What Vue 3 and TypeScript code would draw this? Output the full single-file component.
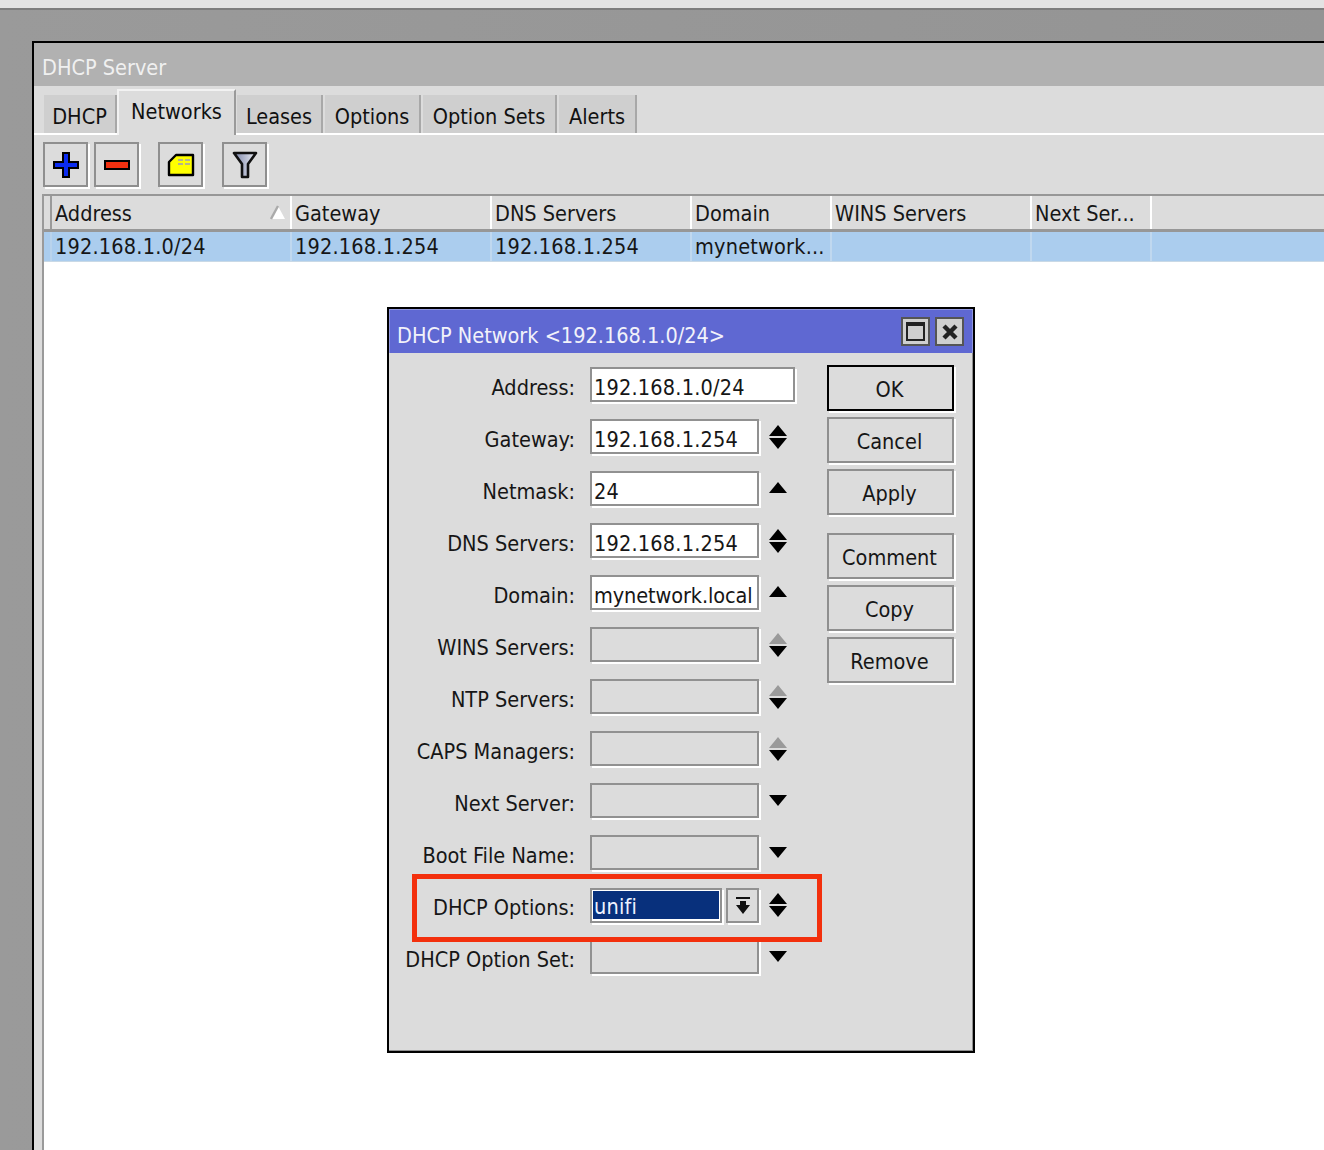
<script setup lang="ts">
type Arrow = 'both' | 'up' | 'down' | 'disabled' | 'none'
interface Row { label: string; value: string; wide?: boolean; enabled: boolean; arrow: Arrow; combo?: boolean; tight?: boolean }

const tabs = ['DHCP', 'Networks', 'Leases', 'Options', 'Option Sets', 'Alerts']
const tabWidths = [73, 119, 86, 96, 134, 78]

const columns = [
  { title: 'Address', cell: '192.168.1.0/24', width: 240, sort: true },
  { title: 'Gateway', cell: '192.168.1.254', width: 200 },
  { title: 'DNS Servers', cell: '192.168.1.254', width: 200 },
  { title: 'Domain', cell: 'mynetwork...', width: 140 },
  { title: 'WINS Servers', cell: '', width: 200 },
  { title: 'Next Ser...', cell: '', width: 120 },
]

const rows: Row[] = [
  { label: 'Address:', value: '192.168.1.0/24', wide: true, enabled: true, arrow: 'none' },
  { label: 'Gateway:', value: '192.168.1.254', enabled: true, arrow: 'both' },
  { label: 'Netmask:', value: '24', enabled: true, arrow: 'up' },
  { label: 'DNS Servers:', value: '192.168.1.254', enabled: true, arrow: 'both' },
  { label: 'Domain:', value: 'mynetwork.local', enabled: true, arrow: 'up', tight: true },
  { label: 'WINS Servers:', value: '', enabled: false, arrow: 'disabled' },
  { label: 'NTP Servers:', value: '', enabled: false, arrow: 'disabled' },
  { label: 'CAPS Managers:', value: '', enabled: false, arrow: 'disabled' },
  { label: 'Next Server:', value: '', enabled: false, arrow: 'down' },
  { label: 'Boot File Name:', value: '', enabled: false, arrow: 'down' },
  { label: 'DHCP Options:', value: 'unifi', enabled: true, arrow: 'both', combo: true },
  { label: 'DHCP Option Set:', value: '', enabled: false, arrow: 'down' },
]

const buttonGroups = [['OK', 'Cancel', 'Apply'], ['Comment', 'Copy', 'Remove']]
</script>

<template>
  <div class="page">
    <div class="strip"></div>
    <div class="desk">
      <div class="window">
        <div class="win-title">DHCP Server</div>
        <div class="tabs">
          <div
            v-for="(t, i) in tabs"
            :key="t"
            class="tab"
            :class="{ active: t === 'Networks' }"
            :style="{ width: tabWidths[i] + 'px' }"
          >{{ t }}</div>
        </div>
        <div class="toolbar">
          <div class="tool">
            <svg width="26" height="26" viewBox="0 0 26 26"><path d="M10 1h6v9h9v6h-9v9h-6v-9H1v-6h9z" fill="#0a2bf0" stroke="#000" stroke-width="2"/></svg>
          </div>
          <div class="tool">
            <svg width="26" height="12" viewBox="0 0 26 12"><rect x="1" y="2" width="24" height="8" fill="#f03010" stroke="#000" stroke-width="2"/></svg>
          </div>
          <div class="tool gap">
            <svg width="28" height="24" viewBox="0 0 28 24"><path d="M9 2h17v20H2V9z" fill="#ffff00" stroke="#000" stroke-width="2.4" stroke-linejoin="round"/><path d="M11 7h14M11 11h14" stroke="#b5b58a" stroke-width="2" stroke-dasharray="5 2"/></svg>
          </div>
          <div class="tool gap">
            <svg width="26" height="28" viewBox="0 0 26 28"><defs><linearGradient id="fun" x1="0" x2="1" y1="0" y2="0"><stop offset="0" stop-color="#7d86aa"/><stop offset="1" stop-color="#eceef4"/></linearGradient></defs><path d="M2 2h22l-8 11v13h-6V13z" fill="url(#fun)" stroke="#111" stroke-width="2.6" stroke-linejoin="round"/></svg>
          </div>
        </div>
        <div class="table">
          <div class="thead">
            <div class="stub"></div>
            <div v-for="c in columns" :key="c.title" class="th" :style="{ width: c.width + 'px' }">
              <span>{{ c.title }}</span>
              <svg v-if="c.sort" class="sort" width="16" height="15" viewBox="0 0 16 15"><path d="M8 1l7 13H1z" fill="#fff"/><path d="M8 1L1 14" stroke="#aaa" stroke-width="2.4"/></svg>
            </div>
            <div class="th rest"></div>
          </div>
          <div class="trow">
            <div class="stub cell-stub"></div>
            <div v-for="c in columns" :key="c.title" class="td" :style="{ width: c.width + 'px' }">{{ c.cell }}</div>
            <div class="td rest"></div>
          </div>
        </div>
      </div>
    </div>

    <div class="dialog">
      <div class="dlg-title">
        <span>DHCP Network &lt;192.168.1.0/24&gt;</span>
        <div class="dlg-btns">
          <div class="dlg-btn"><i class="max"></i></div>
          <div class="dlg-btn">
            <svg width="18" height="18" viewBox="0 0 18 18"><path d="M3 3l12 12M15 3L3 15" stroke="#222" stroke-width="4.4"/></svg>
          </div>
        </div>
      </div>
      <div class="dlg-body">
        <div class="form">
          <div v-for="r in rows" :key="r.label" class="frow">
            <label class="flabel">{{ r.label }}</label>
            <div v-if="r.combo" class="combo">
              <div class="field sel-wrap"><span class="sel">{{ r.value }}</span></div>
              <div class="dd">
                <svg width="16" height="17" viewBox="0 0 16 17"><path d="M1 0h14v2H1zM5 4h6v4h4l-7 9-7-9h4z" fill="#111"/></svg>
              </div>
            </div>
            <div v-else class="field" :class="{ wide: r.wide, off: !r.enabled, tight: r.tight }">{{ r.value }}</div>
            <svg v-if="r.arrow !== 'none'" class="arrow" :class="r.arrow" width="20" height="24" viewBox="0 0 20 24">
              <path v-if="r.arrow === 'both' || r.arrow === 'up'" d="M10 0l9 11H1z" fill="#000"/>
              <path v-if="r.arrow === 'disabled'" d="M10 0l9 11H1z" fill="#9a9a9a"/>
              <path v-if="r.arrow === 'both' || r.arrow === 'disabled'" d="M1 13h18l-9 11z" fill="#000"/>
              <path v-if="r.arrow === 'down'" d="M1 0h18l-9 11z" fill="#000"/>
            </svg>
          </div>
        </div>
        <div class="actions">
          <div v-for="(g, i) in buttonGroups" :key="i" class="group">
            <div v-for="b in g" :key="b" class="btn" :class="{ def: b === 'OK' }">{{ b }}</div>
          </div>
        </div>
      </div>
      <div class="highlight"></div>
    </div>
  </div>
</template>

<style scoped>
.page {
  position: relative;
  width: 1324px;
  height: 1150px;
  overflow: hidden;
  background: linear-gradient(90deg, #9a9a9a, #949494);
  font-family: "DejaVu Sans Condensed", "DejaVu Sans", sans-serif;
  font-stretch: condensed;
  font-size: 21.5px;
  color: #161616;
}
.strip {
  height: 8px;
  background: #e3e3e3;
  border-bottom: 2px solid #7d7d7d;
}
.desk {
  height: 1140px;
  padding: 31px 0 0 32px;
  box-sizing: border-box;
}
.window {
  display: flex;
  flex-direction: column;
  width: 1300px;
  height: 1109px;
  border: 2px solid #000;
  border-bottom: 0;
  background: #dcdcdc;
  box-sizing: border-box;
}
.win-title {
  height: 43px;
  line-height: 50px;
  padding-left: 8px;
  background: #b1b1b1;
  color: #f0f0f0;
  flex: none;
}
.tabs {
  display: flex;
  align-items: flex-end;
  gap: 2px;
  height: 49px;
  padding-left: 10px;
  background: #dcdcdc;
  border-bottom: 2px solid #fff;
  box-sizing: border-box;
  flex: none;
}
.tab {
  height: 38px;
  line-height: 43px;
  text-align: center;
  background: #cfcfcf;
  border-right: 2px solid #a8a8a8;
  box-sizing: border-box;
  flex: none;
  color: #111;
}
.tab.active {
  height: 46px;
  margin: 0 -1px -2px -2px;
  line-height: 42px;
  background: #dcdcdc;
  border-top: 2px solid #f2f2f2;
  border-left: 2px solid #f2f2f2;
  border-right: 2px solid #9a9a9a;
}
.toolbar {
  display: flex;
  gap: 6px;
  height: 59px;
  padding: 7px 0 0 9px;
  background: #dcdcdc;
  box-sizing: border-box;
  flex: none;
}
.tool {
  width: 45px;
  height: 45px;
  display: flex;
  align-items: center;
  justify-content: center;
  padding-left: 1px;
  border: 2px solid #8f8f8f;
  box-shadow: 2px 2px 0 #fff;
  box-sizing: border-box;
  background: #dcdcdc;
}
.tool.gap { margin-left: 13px; }
.table {
  flex: 1;
  margin-left: 8px;
  border-left: 2px solid #9a9a9a;
  background: #fff;
}
.thead, .trow { display: flex; }
.thead {
  height: 38px;
  background: #dcdcdc;
  border-top: 2px solid #979797;
  border-bottom: 3px solid #979797;
  box-sizing: border-box;
}
.trow {
  height: 30px;
  background: #abcdee;
  border-bottom: 1px solid #c9d9e6;
  box-sizing: border-box;
}
.stub {
  width: 6px;
  flex: none;
  border-right: 2px solid #9a9a9a;
  box-sizing: content-box;
}
.cell-stub { border-right: 2px solid #b9d3ec; }
.th, .td {
  position: relative;
  flex: none;
  box-sizing: border-box;
  padding-left: 3px;
  white-space: nowrap;
  overflow: hidden;
}
.th {
  line-height: 35px;
  border-right: 2px solid #fff;
}
.td {
  line-height: 30px;
  letter-spacing: 0.2px;
  border-right: 2px solid #c0d8ef;
}
.rest { flex: 1; border-right: 0; }
.sort {
  position: absolute;
  right: 4px;
  top: 9px;
}
.dialog {
  position: absolute;
  left: 387px;
  top: 307px;
  width: 588px;
  height: 746px;
  box-sizing: border-box;
  border: 2px solid #000;
  background: #dcdcdc;
  box-shadow: inset -1px -1px 0 #8f8f8f;
}
.dlg-title {
  display: flex;
  align-items: center;
  justify-content: space-between;
  height: 44px;
  padding: 0 8px 0 7px;
  background: #5f68d2;
  border-top: 1px solid #8f96de;
  border-left: 1px solid #8f96de;
  border-right: 1px solid #8f96de;
  box-sizing: border-box;
  color: #f2f2fa;
}
.dlg-title span { padding-top: 8px; }
.dlg-btns { display: flex; gap: 5px; }
.dlg-btn {
  width: 29px;
  height: 29px;
  display: flex;
  align-items: center;
  justify-content: center;
  box-sizing: border-box;
  background: #cfcfcf;
  border: 2px solid #555;
}
.max {
  display: block;
  width: 19px;
  height: 19px;
  box-sizing: border-box;
  border: 2px solid #222;
  border-top-width: 4px;
}
.dlg-body {
  display: flex;
  padding: 12px 0 0;
}
.form {
  display: flex;
  flex-direction: column;
  gap: 16px;
  width: 438px;
  padding-top: 2px;
}
.frow {
  position: relative;
  display: flex;
  height: 36px;
  align-items: flex-start;
}
.flabel {
  width: 186px;
  flex: none;
  text-align: right;
  white-space: nowrap;
  line-height: 42px;
}
.field {
  margin-left: 15px;
  width: 169px;
  height: 35px;
  line-height: 37px;
  box-sizing: border-box;
  padding-left: 2px;
  flex: none;
  background: #fff;
  border: 2px solid #919191;
  box-shadow: 2px 2px 0 #fff;
  white-space: nowrap;
  overflow: hidden;
  letter-spacing: 0.2px;
}
.field.wide { width: 205px; }
.field.off { background: #dcdcdc; }
.field.tight { letter-spacing: -0.1px; }
.combo {
  display: flex;
  gap: 4px;
  margin: 1px 0 0 15px;
}
.combo .field { margin-left: 0; }
.sel-wrap {
  width: 132px;
  padding: 1px;
}
.sel {
  display: block;
  height: 28px;
  line-height: 32px;
  background: #08307c;
  color: #eef2ff;
  padding-left: 1px;
  overflow: hidden;
}
.dd {
  width: 33px;
  height: 35px;
  display: flex;
  align-items: center;
  justify-content: center;
  box-sizing: border-box;
  border: 2px solid #919191;
  box-shadow: 2px 2px 0 #fff;
}
.arrow {
  position: absolute;
  left: 379px;
  top: 6px;
}
.arrow.up { top: 11px; }
.arrow.down { top: 12px; }
.actions {
  display: flex;
  flex-direction: column;
  gap: 18px;
}
.group {
  display: flex;
  flex-direction: column;
  gap: 6px;
}
.btn {
  width: 127px;
  height: 46px;
  line-height: 46px;
  padding-right: 2px;
  text-align: center;
  box-sizing: border-box;
  border: 2px solid #8f8f8f;
  box-shadow: 2px 2px 0 #fff;
}
.btn.def { border-color: #000; }
.highlight {
  position: absolute;
  left: 23px;
  top: 565px;
  width: 410px;
  height: 68px;
  box-sizing: border-box;
  border: 5px solid #f3300d;
}
</style>
